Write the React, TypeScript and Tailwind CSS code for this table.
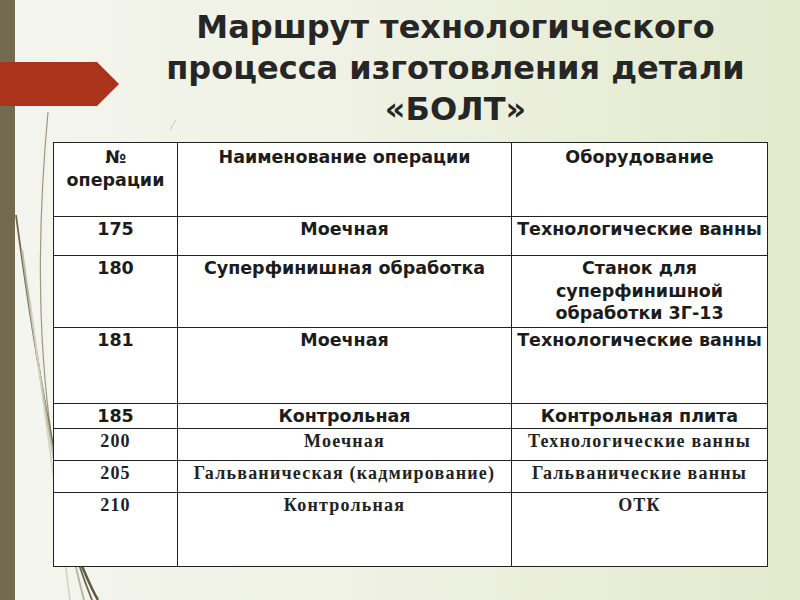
import React from 'react';

type Row = {
  no: string;
  op: string;
  eq: string[];
  h: string;
  serif?: boolean;
};

const rows: Row[] = [
  { no: '175', op: 'Моечная', eq: ['Технологические ванны'], h: 'h-[39px]' },
  { no: '180', op: 'Суперфинишная обработка', eq: ['Станок для', 'суперфинишной', 'обработки 3Г-13'], h: 'h-[72px]' },
  { no: '181', op: 'Моечная', eq: ['Технологические ванны'], h: 'h-[76px]' },
  { no: '185', op: 'Контрольная', eq: ['Контрольная плита'], h: 'h-[25px]' },
  { no: '200', op: 'Моечная', eq: ['Технологические ванны'], h: 'h-[32px]', serif: true },
  { no: '205', op: 'Гальваническая (кадмирование)', eq: ['Гальванические ванны'], h: 'h-[32px]', serif: true },
  { no: '210', op: 'Контрольная', eq: ['ОТК'], h: 'h-[74px]', serif: true },
];

const sans = "font-['DejaVu_Sans',Verdana,sans-serif] font-bold text-[17.5px] leading-[22.5px] text-[#1c1c1c]";
const serif = "font-['Liberation_Serif','Times_New_Roman',serif] font-bold text-[18px] tracking-[1.2px] leading-[22px] text-[#222]";

export default function App() {
  return (
    <div className="relative w-[800px] h-[600px] overflow-hidden flex bg-gradient-to-r from-[#f4f5ee] via-[#eef1e2] to-[#e3eacd]">
      {/* background curves */}
      <svg className="absolute inset-0 pointer-events-none" width="800" height="600" viewBox="0 0 800 600">
        <path d="M48 112 C 38 220, 36 330, 52 440" stroke="#9d9882" strokeWidth="1.2" fill="none" />
        <path d="M16 215 C 30 320, 44 400, 54 450 C 64 520, 76 560, 92 600" stroke="#6e6750" strokeWidth="1.8" fill="none" />
        <path d="M22 250 C 40 380, 58 500, 84 600" stroke="#b9b6a3" strokeWidth="2" fill="none" />
        <path d="M30 300 C 45 420, 60 520, 70 600" stroke="#d3d2c2" strokeWidth="1.5" fill="none" />
        <path d="M82 566 C 88 580, 92 590, 98 600" stroke="#5f5944" strokeWidth="2.5" fill="none" />
        <path d="M176 120 L 170 130" stroke="#c8c8b8" strokeWidth="1" fill="none" />
      </svg>

      {/* left stripe */}
      <div className="w-[15px] h-full bg-[#726a51] shrink-0" />

      {/* arrow */}
      <svg className="absolute left-0 top-[62px]" width="120" height="44" viewBox="0 0 120 44">
        <polygon points="0,0 97,0 119,22 97,44 0,44" fill="#a9331b" />
      </svg>

      <div className="relative flex-1 flex flex-col">
        <h1 className="pt-[7px] pl-[118px] pr-[22px] text-center font-['DejaVu_Sans',Verdana,sans-serif] font-bold text-[32px] leading-[41px] text-[#262626]">
          Маршрут технологического
          <br />
          процесса изготовления детали
          <br />
          «БОЛТ»
        </h1>

        <table className="ml-[38px] mt-[12px] w-[714px] border-collapse bg-white table-fixed">
          <colgroup>
            <col className="w-[124px]" />
            <col className="w-[334px]" />
            <col className="w-[256px]" />
          </colgroup>
          <tbody>
            <tr className="h-[74px]">
              <td className={`border border-[#222] align-top text-center pt-[3px] ${sans}`}>
                №
                <br />
                операции
              </td>
              <td className={`border border-[#222] align-top text-center pt-[3px] ${sans}`}>Наименование операции</td>
              <td className={`border border-[#222] align-top text-center pt-[3px] ${sans}`}>Оборудование</td>
            </tr>
            {rows.map((r) => (
              <tr key={r.no} className={r.h}>
                <td className={`border border-[#222] align-top text-center p-0 pt-[1px] ${r.serif ? serif : sans}`}>{r.no}</td>
                <td className={`border border-[#222] align-top text-center p-0 pt-[1px] ${r.serif ? serif : sans}`}>{r.op}</td>
                <td className={`border border-[#222] align-top text-center p-0 pt-[1px] ${r.serif ? serif : sans}`}>
                  {r.eq.map((line, i) => (
                    <div key={i}>{line}</div>
                  ))}
                </td>
              </tr>
            ))}
          </tbody>
        </table>
      </div>
    </div>
  );
}
